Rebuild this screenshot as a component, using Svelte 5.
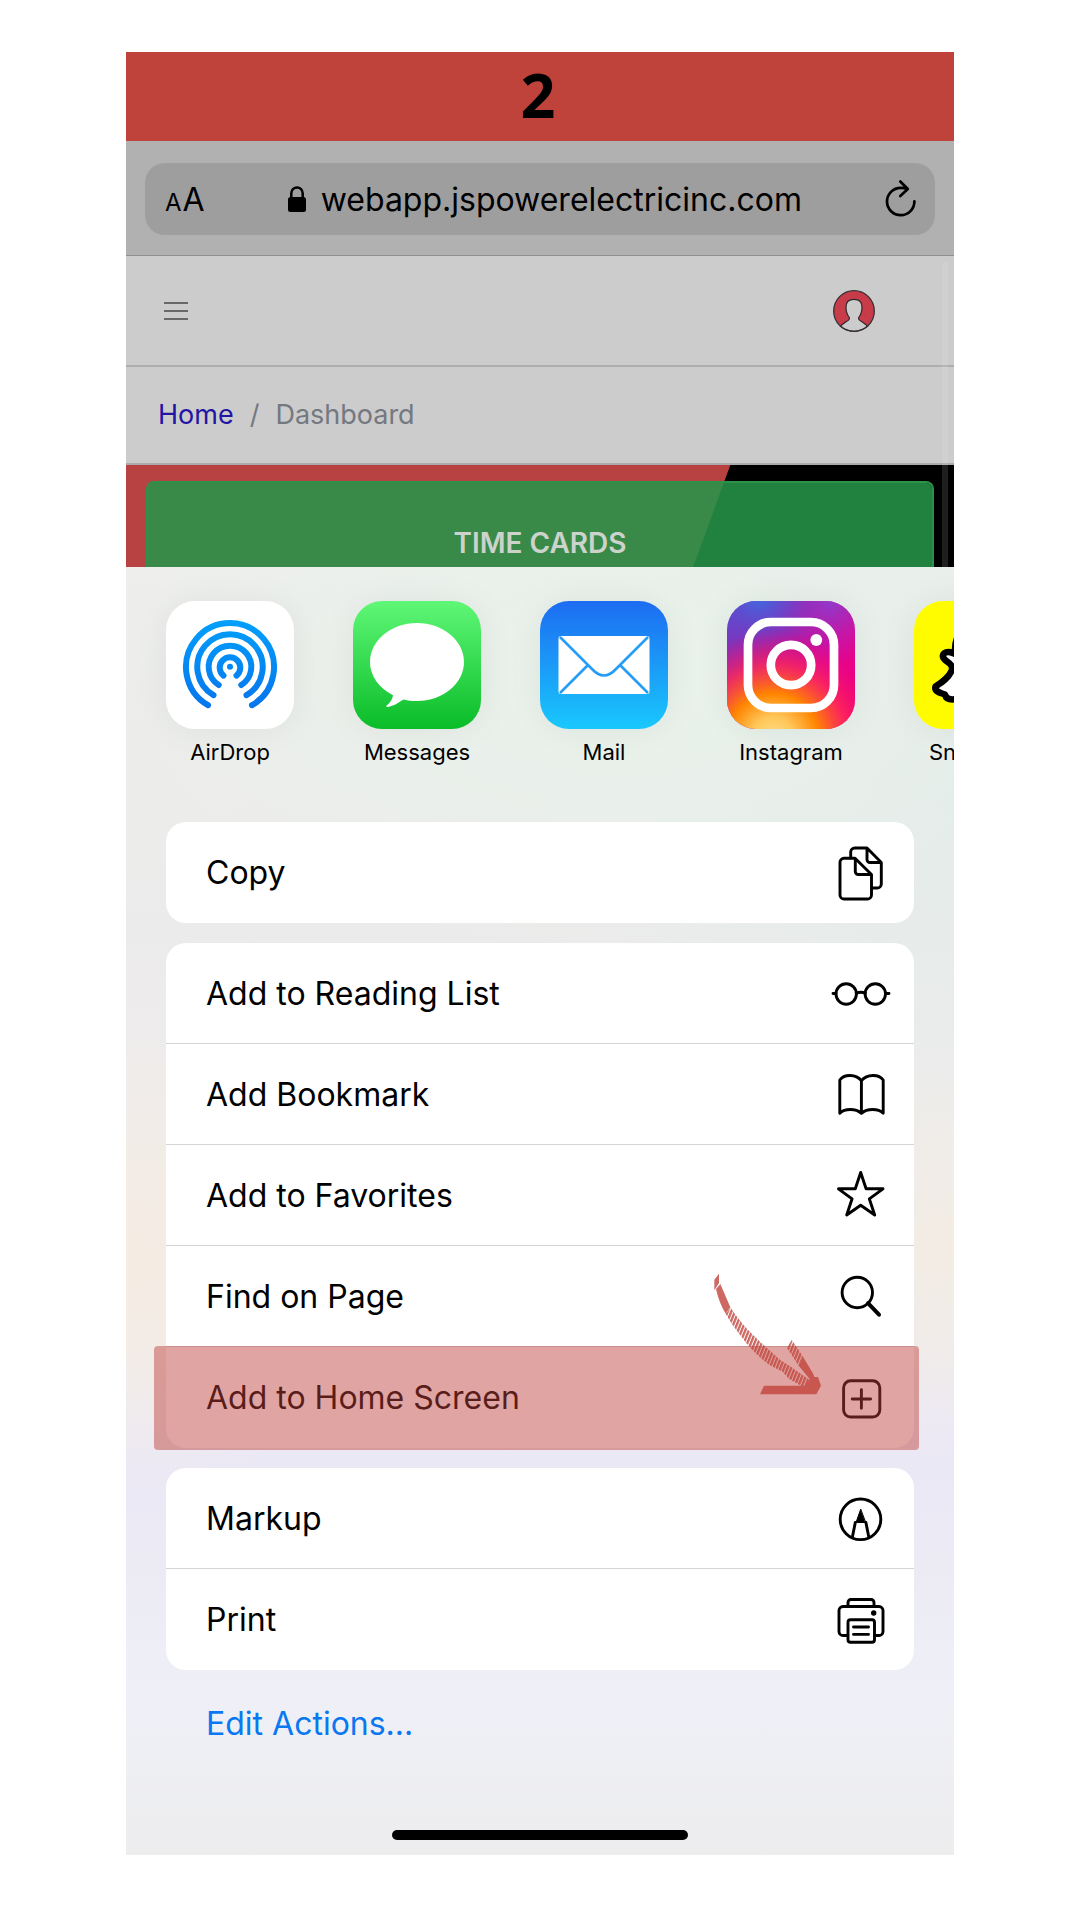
<script>
  const apps = ['AirDrop', 'Messages', 'Mail', 'Instagram', 'Snapchat'];

  const groups = [
    [{ label: 'Copy', icon: 'copy' }],
    [
      { label: 'Add to Reading List', icon: 'glasses' },
      { label: 'Add Bookmark', icon: 'book' },
      { label: 'Add to Favorites', icon: 'star' },
      { label: 'Find on Page', icon: 'search' },
      { label: 'Add to Home Screen', icon: 'plus', marked: true }
    ],
    [
      { label: 'Markup', icon: 'markup' },
      { label: 'Print', icon: 'print' }
    ]
  ];
</script>

{#snippet actionIcon(name)}
  <svg class="action-icon" viewBox="0 0 60 60" aria-hidden="true">
    {#if name === 'copy'}
      <path d="M24 15.3H13a4 4 0 0 0-4 4V52a4 4 0 0 0 4 4h23.5a4 4 0 0 0 4-4V31.5zM24.3 15.5v13a3 3 0 0 0 3 3H40" />
      <path d="M19.7 15V9a4 4 0 0 1 4-4H36l14.3 14.5V41a4 4 0 0 1-4 4H41M36 5.5v11a3 3 0 0 0 3 3h11" />
    {:else if name === 'glasses'}
      <circle cx="15.2" cy="31" r="10.2" />
      <circle cx="44.3" cy="31" r="10.2" />
      <path d="M25.3 30.2q4.5-2 9 0M2 30.5h3M55 30.5h3" />
    {:else if name === 'book'}
      <path d="M8.8 16C13 9.800 25 9.800 30.400 16.700 36 9.800 48 9.800 52.200 16V49.300c-5-5-16-5-21.800 0-5.600-5-16.600-5-21.600 0zM30.400 17v32" />
    {:else if name === 'star'}
      <path d="M29.7 7.5 35.1 23.800H52L38.300 33.800 43.700 50 29.700 40.200 15.700 50 21.100 33.800 7.400 23.800H24.300z" />
    {:else if name === 'search'}
      <circle cx="26.3" cy="26.5" r="15.2" />
      <path class="heavy" d="M37 37.2 48 48.7" />
    {:else if name === 'plus'}
      <rect x="12.6" y="12.8" width="36.2" height="36.2" rx="7" />
      <path d="M21.2 31h18.4M30.4 21.800v18.400" />
    {:else if name === 'markup'}
      <circle cx="29.5" cy="31.3" r="20.3" />
      <path d="M24.3 34.5 21.400 49M34.900 34.500 37.800 49" />
      <path class="solid" d="M29.600 21.500 25 34.500h9.400z" />
    {:else}
      <path d="M16.500 45.500H12a4 4 0 0 1-4-4V20.500a4 4 0 0 1 4-4h36a4 4 0 0 1 4 4v21a4 4 0 0 1-4 4h-4.500M17 16.500v-4a3 3 0 0 1 3-3h20a3 3 0 0 1 3 3v4" />
      <rect x="17" y="29.700" width="26.500" height="22.500" rx="2.500" />
      <path d="M22.500 37h15M22.500 44.400h15" />
      <circle class="dot" cx="42.700" cy="23" r="2.700" />
    {/if}
  </svg>
{/snippet}

{#snippet appIcon(name)}
  <svg class="app-icon" viewBox="0 0 128 128" aria-hidden="true">
    {#if name === 'AirDrop'}
      <defs>
        <linearGradient id="air" gradientUnits="userSpaceOnUse" x1="0" y1="18" x2="0" y2="110">
          <stop offset="0" stop-color="#02a0fb" /><stop offset="1" stop-color="#0773ec" />
        </linearGradient>
      </defs>
      <rect width="128" height="128" fill="#fff" />
      <g fill="none" stroke="url(#air)" stroke-width="6" stroke-linecap="round">
        <path d="M42 104.2A44 44 0 1 1 86 104.2" />
        <path d="M47.500 94.200A32.700 32.700 0 1 1 80.500 94.200" />
        <path d="M52.700 84A21.300 21.300 0 1 1 75.300 84" />
        <path d="M57.500 74.600A10.300 10.300 0 1 1 70.500 74.600" />
      </g>
      <circle cx="64" cy="65.700" r="3" fill="#0288f5" />
    {:else if name === 'Messages'}
      <defs>
        <linearGradient id="msg" x1="0" y1="0" x2="0" y2="1">
          <stop offset="0" stop-color="#5ff777" /><stop offset="1" stop-color="#0abc28" />
        </linearGradient>
      </defs>
      <rect width="128" height="128" fill="url(#msg)" />
      <path fill="#fff" d="M64 22c26 0 47 17.500 47 39s-21 39-47 39c-5 0-9-.4-13.500-1.500C45 102 40 105.500 34 106c-1 0-1-1 0-1.700 3.500-3 5.500-6.300 6-10C26 87 17 75 17 61c0-21.500 21-39 47-39z" />
    {:else if name === 'Mail'}
      <defs>
        <linearGradient id="mail" x1="0" y1="0" x2="0" y2="1">
          <stop offset="0" stop-color="#1d6cf1" /><stop offset="1" stop-color="#19c8fd" />
        </linearGradient>
      </defs>
      <rect width="128" height="128" fill="url(#mail)" />
      <rect x="18.500" y="35" width="91" height="58" rx="2.500" fill="#fff" />
      <path fill="none" stroke="#259cf6" stroke-width="2.600" d="M20 36 52 68Q64 81 76 68L108 36M20 92 47.500 64.500M108 92 80.500 64.500" />
    {:else if name === 'Instagram'}
      <defs>
        <linearGradient id="igBase" x1="0" y1="0" x2="1" y2=".7">
          <stop offset="0" stop-color="#5b48ce" /><stop offset=".45" stop-color="#ad1aa0" />
          <stop offset=".75" stop-color="#e00595" /><stop offset="1" stop-color="#ee007c" />
        </linearGradient>
        <radialGradient id="igBlue" cx=".25" cy="-.04" r=".5">
          <stop offset="0" stop-color="#3f6ae0" /><stop offset=".4" stop-color="#5a50d2" stop-opacity=".8" />
          <stop offset="1" stop-color="#7638c8" stop-opacity="0" />
        </radialGradient>
        <radialGradient id="igViolet" cx=".8" cy="0" r=".5">
          <stop offset="0" stop-color="#8f3acc" /><stop offset="1" stop-color="#b820b0" stop-opacity="0" />
        </radialGradient>
        <radialGradient id="igWarm" cx=".36" cy="1.08" r=".85">
          <stop offset="0" stop-color="#ffe08a" /><stop offset=".2" stop-color="#ffc75a" />
          <stop offset=".42" stop-color="#ff8500" /><stop offset=".68" stop-color="#ff2b55" stop-opacity=".8" />
          <stop offset="1" stop-color="#f0007c" stop-opacity="0" />
        </radialGradient>
      </defs>
      <rect width="128" height="128" fill="url(#igBase)" />
      <rect width="128" height="128" fill="url(#igViolet)" />
      <rect width="128" height="128" fill="url(#igBlue)" />
      <rect width="128" height="128" fill="url(#igWarm)" />
      <g fill="none" stroke="#fff" stroke-width="8.700">
        <rect x="21" y="21" width="86" height="86" rx="23" />
        <circle cx="64" cy="64" r="20.200" />
      </g>
      <circle cx="89.300" cy="39" r="5.900" fill="#fff" />
    {:else}
      <rect width="128" height="128" fill="#fffc00" />
      <path fill="#fff" stroke="#000" stroke-width="6.500" stroke-linejoin="round" d="M64 25C46 25 40 37 41 53c-7-4-13-1.500-12 3 1.500 5 11.500 6 8.500 14-3 7-9 11-16 15.500C20 91 27 92 31 93.500c1 5 6 5.500 12 4.500 8-1 13 6 21 6s13-7 21-6c6 1 11 .5 12-4.500 4-1.500 11-2.500 9.500-8-7-4.500-13-8.500-16-15.500-3-8 7-9 8.500-14 1-4.500-5-7-12-3 1-16-5-28-23-28z" />
    {/if}
  </svg>
{/snippet}

<main class="page">
  <h1 class="step">2</h1>

  <section class="phone">
    <div class="browser-bar">
      <div class="address">
        <button class="text-size" aria-label="Text size"><small>A</small>A</button>
        <button class="url">
          <svg class="lock" viewBox="0 0 18 26" aria-hidden="true">
            <rect y="11" width="18" height="15" rx="2.500" />
            <path d="M3.300 12V7.200a5.700 5.700 0 0 1 11.400 0V12" fill="none" stroke="#000" stroke-width="2.500" />
          </svg>
          <span>webapp.jspowerelectricinc.com</span>
        </button>
        <button class="reload" aria-label="Reload">
          <svg viewBox="0 0 32 40" aria-hidden="true">
            <path d="M29.400 22.300A13.700 13.700 0 1 1 15.700 8.800Q19.500 8.800 22.500 10M15.300 2.500 22.800 10 15.300 17" />
          </svg>
        </button>
      </div>
    </div>

    <div class="site">
      <header class="site-header">
        <button class="menu" aria-label="Menu"><i></i><i></i><i></i></button>
        <button class="avatar" aria-label="Account">
          <svg viewBox="0 0 42 42" aria-hidden="true">
            <circle cx="21" cy="21" r="20.400" fill="#c83b48" />
            <path fill="#ccc" stroke="#30262b" stroke-width="1.200" d="M7.300 36 13 31.800c3-1.500 4.300-3 3-4.800-2-2.500-3-5-3-10 0-5 2.500-7.700 8-7.700s8 2.700 8 7.700c0 5-1 7.500-3 10-1.300 1.800 0 3.300 3 4.800L34.700 36A20.400 20.400 0 0 1 7.300 36z" />
            <circle cx="21" cy="21" r="20.300" fill="none" stroke="#353238" stroke-width="1.300" />
          </svg>
        </button>
      </header>
      <nav class="crumbs" aria-label="Breadcrumb">
        <a href="#home">Home</a><span>/</span><span>Dashboard</span>
      </nav>
      <div class="hero">
        <button class="time-cards">TIME CARDS</button>
      </div>
      <div class="scrollbar"></div>
    </div>

    <div class="sheet">
      <div class="apps">
        {#each apps as app}
          <button class="app">
            {@render appIcon(app)}
            <span>{app}</span>
          </button>
        {/each}
      </div>

      <div class="groups">
        {#each groups as group}
          <div class="group">
            {#each group as item}
              <button class="row" class:marked={item.marked}>
                <span>{item.label}</span>
                {@render actionIcon(item.icon)}
                {#if item.marked}
                  <svg class="arrow" viewBox="100 100 325 366" aria-hidden="true">
                    <defs>
                      <pattern id="hatch" width="10" height="40" patternUnits="userSpaceOnUse" patternTransform="rotate(22)">
                        <rect width="7" height="40" fill="#c1443b" />
                      </pattern>
                    </defs>
                    <path fill="#c1443b" d="M103 120 117 102V130L103 152zM108 148 121 133 151 203 137 222Q118 192 108 148z" />
                    <path fill="url(#hatch)" d="M137 222 152 204Q182 250 220 287T300 360L330 380 385 418 400 442 365 440 325 416 308 396 268 376Q215 335 185 292Q155 254 137 222z" />
                    <path fill="url(#hatch)" d="M321 325 335 301 352 325 368 350 356 378z" />
                    <path fill="#c1443b" d="M356 378 368 350 400 403 403 412H414L423 438 409 464H240L252 438H378L389 418z" />
                  </svg>
                {/if}
              </button>
            {/each}
          </div>
        {/each}
      </div>

      <button class="edit">Edit Actions...</button>
      <div class="home-indicator"></div>
    </div>
  </section>
</main>

<style>
  :global(body) {
    margin: 0;
    background: #fff;
  }

  .page {
    box-sizing: border-box;
    padding: 52px 126px 64px;
    font-family: Inter, 'Liberation Sans', sans-serif;
    color: #000;
  }

  button {
    margin: 0;
    padding: 0;
    border: 0;
    background: none;
    font: inherit;
    color: inherit;
  }

  svg {
    display: block;
  }

  .step {
    margin: 0;
    padding: 0 4px 4px 0;
    background: #c0433b;
    font: 700 61px/85px 'Open Sans', 'Noto Sans', sans-serif;
    text-align: center;
  }

  .browser-bar {
    padding: 22px 19px 20px;
    background: #b1b1b1;
    border-bottom: 1px solid #8f8f90;
  }

  .address {
    display: flex;
    align-items: center;
    justify-content: space-between;
    height: 72px;
    padding: 0 18px 0 20px;
    border-radius: 20px;
    background: #9e9e9e;
  }

  .text-size {
    font-size: 32px;
  }

  .text-size small {
    margin-right: 1px;
    font-size: 24px;
  }

  .url {
    display: flex;
    align-items: center;
    gap: 15px;
    font-size: 32px;
  }

  .lock {
    width: 18px;
    height: 26px;
  }

  .reload svg {
    width: 32px;
    height: 40px;
    fill: none;
    stroke: #000;
    stroke-width: 2.700;
    stroke-linecap: round;
    stroke-linejoin: round;
  }

  .site {
    position: relative;
    background: #ccc;
  }

  .site-header {
    display: flex;
    align-items: center;
    justify-content: space-between;
    height: 109px;
    padding: 0 79px 0 38px;
    border-bottom: 2px solid #aeaeaf;
  }

  .menu {
    display: grid;
    gap: 6px;
    width: 24px;
  }

  .menu i {
    height: 2px;
    background: #68686c;
  }

  .avatar svg {
    width: 42px;
    height: 42px;
  }

  .crumbs {
    display: flex;
    align-items: center;
    gap: 16px;
    box-sizing: border-box;
    height: 98px;
    padding: 0 0 2px 32px;
    border-bottom: 2px solid #aaabad;
    font-size: 27px;
    color: #747880;
  }

  .crumbs a {
    color: #2414a4;
    text-decoration: none;
  }

  .hero {
    display: flex;
    height: 86px;
    padding: 16px 20px 0;
    background: linear-gradient(110deg, #b84141 69.8%, #000 69.9%);
  }

  .time-cards {
    flex: 1;
    padding-top: 36px;
    border: 2px solid #2d9149;
    border-bottom: 0;
    border-radius: 8px 8px 0 0;
    background: rgba(38, 149, 73, 0.87);
    background-clip: padding-box;
    font-size: 28px;
    font-weight: 600;
    color: #ccd3cc;
  }

  .scrollbar {
    position: absolute;
    top: 6px;
    right: 6px;
    bottom: 0;
    width: 6px;
    border-radius: 3px 3px 0 0;
    background: rgba(240, 240, 240, 0.13);
  }

  .sheet {
    padding-bottom: 15px;
    background:
      radial-gradient(ellipse 60% 22% at 60% 8%, #e8f2ea, rgba(232, 242, 234, 0)),
      radial-gradient(ellipse 30% 18% at 0% 54%, #f5ece2, rgba(245, 236, 226, 0)),
      radial-gradient(ellipse 30% 14% at 100% 53%, #f2ece3, rgba(242, 236, 227, 0)),
      radial-gradient(ellipse 50% 30% at 100% 18%, #e4ecea, rgba(228, 236, 234, 0)),
      linear-gradient(#eeefed, #ecedeb 12%, #ecebeb 28%, #efecec 45%, #eeebee 60%, #ebe8f6 70%, #ecebf4 78%, #eff0f7 88%, #ededee);
  }

  .apps {
    display: flex;
    gap: 59px;
    padding: 34px 0 55px 40px;
    overflow: hidden;
  }

  .app {
    display: flex;
    flex: none;
    flex-direction: column;
    align-items: center;
    gap: 9px;
    width: 128px;
    font-size: 22px;
    line-height: 29px;
  }

  .app-icon {
    width: 128px;
    height: 128px;
    border-radius: 29px;
    box-shadow: 0 0 36px rgba(0, 0, 0, 0.06);
  }

  .groups {
    display: grid;
    gap: 20px;
    padding: 0 40px;
  }

  .group {
    border-radius: 20px;
    background: #fff;
  }

  .row {
    position: relative;
    display: flex;
    align-items: center;
    justify-content: space-between;
    box-sizing: border-box;
    width: 100%;
    height: 101px;
    padding: 0 23px 0 40px;
    font-size: 32px;
  }

  .row:not(:last-child) {
    border-bottom: 1px solid #d4d4d6;
  }

  .action-icon {
    width: 60px;
    height: 60px;
    fill: none;
    stroke: #000;
    stroke-width: 2.900;
    stroke-linecap: round;
    stroke-linejoin: round;
  }

  .action-icon .heavy {
    stroke-width: 4;
  }

  .action-icon .solid {
    fill: #000;
    stroke-width: 1;
  }

  .action-icon .dot {
    fill: #000;
    stroke: none;
  }

  /* Translucent marker laid over the row, slightly wider than its group */
  .marked::after {
    content: '';
    position: absolute;
    inset: -1px -5px -2px -12px;
    border-radius: 4px;
    background: rgba(190, 64, 57, 0.47);
  }

  .arrow {
    position: absolute;
    z-index: 1;
    top: -74px;
    right: 92px;
    width: 109px;
    height: 122px;
    opacity: 0.8;
  }

  .edit {
    display: block;
    margin: 34px 0 0 80px;
    font-size: 32px;
    line-height: 40px;
    color: #0a78f0;
  }

  .home-indicator {
    width: 296px;
    height: 10px;
    margin: 86px auto 0;
    border-radius: 5px;
    background: #000;
  }
</style>
